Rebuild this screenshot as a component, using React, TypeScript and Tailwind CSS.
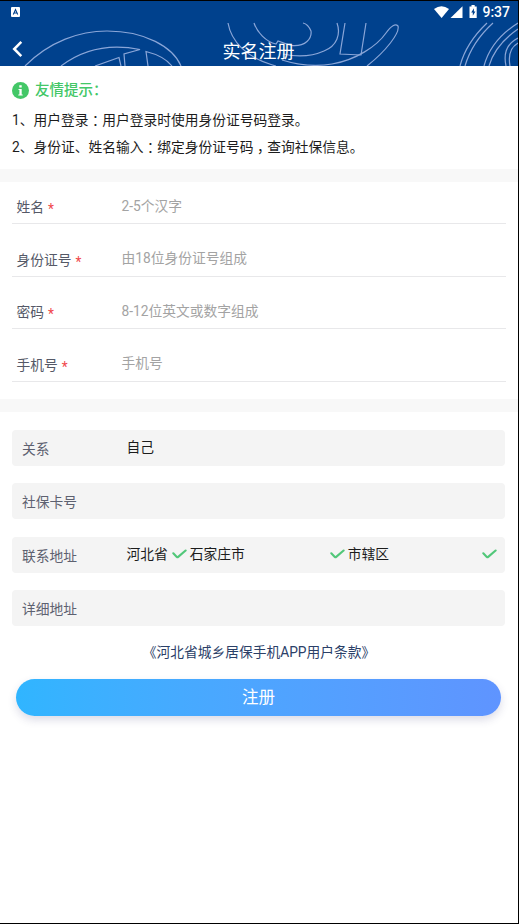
import type { ReactNode } from 'react';

interface Field {
  label: string;
  placeholder: string;
}

const fields: Field[] = [
  { label: '姓名', placeholder: '2-5个汉字' },
  { label: '身份证号', placeholder: '由18位身份证号组成' },
  { label: '密码', placeholder: '8-12位英文或数字组成' },
  { label: '手机号', placeholder: '手机号' },
];

// Full-width mark centred in its em box
function Mark({ children }: { children: string }) {
  return <span className="inline-block w-[1em] text-center [font-feature-settings:'halt']">{children}</span>;
}

function StatusBar() {
  return (
    <div className="flex h-[22px] items-center justify-between pl-[11px] pr-[8px]">
      <svg width="9" height="10" viewBox="0 0 9 10">
        <rect width="9" height="10" rx="1" fill="#fff" />
        <path d="M2.3 7.5 4.5 2.5 6.7 7.5M3.2 6h2.6" fill="none" stroke="#00418d" strokeWidth="1.1" />
      </svg>
      <div className="flex items-center">
        <svg width="46" height="14" viewBox="0 0 46 14" fill="#fff">
          <path d="M0 4Q7.5-1.4 15 4L7.6 13Z" />
          <path d="M28.5 1.2V13H16.500Z" />
          <path d="M35.500 1.400h2V0h3.200v1.400h2V13h-7.200Z" />
          <path d="M40 3.200 37.200 7.500h1.600v3.200l2.600-4.200h-1.500Z" fill="#00418d" />
        </svg>
        <span className="ml-[2px] text-[14px] font-medium leading-none text-white">9:37</span>
      </div>
    </div>
  );
}

function HeaderPattern() {
  return (
    <svg className="absolute inset-0" width="518" height="65" viewBox="0 1 518 65" fill="none" stroke="#8aa6d8" strokeWidth="1.2">
      <path d="M25 66C50 41 80 31 107 31C145 31 173 47 181 66" />
      <path d="M61 66C82 50 108 43 140 49.500L124 54L125 66" />
      <path d="M95 66L119 57.500L121 66" />
      <path d="M148 66L146 51.500Q164 56 172 66" />
      <path d="M228 23C231 40 245 58 276 66" />
      <path d="M254 23C257 32 266 42 276 44L278 41L291 45.500C306 47 312 38 311 31Q308 24 303 23" />
      <path d="M337 23C341 34 337 46 324 51Q306 59 283 54" />
      <path d="M345 23L340 54L361 55L366 23" />
      <path d="M282 60C298 65 315 67 332 64C356 60 377 46 386 33Q394 22 398 26C400 33 386 51 367 66" />
      <path d="M460 66Q466 43 487 23M465 66Q472 42 493 23" />
      <path d="M484 66Q491 40 518 23M489 66Q495 45 518 29" />
      <path d="M506 66C503 52 508 43 518 38M510 66C508 55 511 47 518 43" />
    </svg>
  );
}

function Check() {
  return (
    <svg className="shrink-0" width="15" height="10" viewBox="0 0 15 10" fill="none" stroke="#51c779" strokeWidth="2.1" strokeLinecap="round" strokeLinejoin="round">
      <path d="M1.300 4.300 4.800 7.900Q5.500 8.500 6.200 7.900L13.600 1.500" />
    </svg>
  );
}

function InfoRow({ label, children }: { label: string; children?: ReactNode }) {
  return (
    <div className="flex h-[36px] items-center rounded-[4px] bg-[#f4f4f4] pl-[10px] leading-5">
      <span className="w-[104.5px] pt-[2px] text-[#5d6170]">{label}</span>
      {children}
    </div>
  );
}

export default function App() {
  return (
    <div className="h-[924px] w-[519px] overflow-hidden border-y border-r border-black bg-white font-[Roboto,'Noto_Sans_CJK_SC',sans-serif] text-[13.75px] font-normal text-[#1c1c1c]">
      <header className="relative h-[65px] bg-[#00418d]">
        <HeaderPattern />
        <div className="relative">
          <StatusBar />
          <div className="flex h-[43px] items-center">
            <svg className="ml-3 mt-2" width="11" height="18" viewBox="0 0 11 18" fill="none" stroke="#fff" strokeWidth="2.5">
              <path d="M9.300 1.800 2.200 9l7.100 7.200" />
            </svg>
            <h1 className="-ml-[24px] flex-1 pt-[14px] text-center text-[18px] font-normal leading-6 text-white">实名注册</h1>
          </div>
        </div>
      </header>

      <section className="h-[103px] px-3 pt-[14px]">
        <div className="flex h-5 items-center">
          <svg width="17" height="17" viewBox="0 0 17 17">
            <circle cx="8.500" cy="8.500" r="8.500" fill="#43c767" />
            <path d="M7.300 3.300h2.400v2.100H7.300ZM6.500 7h3.200v5.400h1v1.100H6.300v-1.100h1.100V8.100h-.9Z" fill="#fff" />
          </svg>
          <span className="ml-[6px] pt-[2px] text-[14.5px] font-medium leading-5 text-[#43c767]">友情提示：</span>
        </div>
        <div className="mt-[7px] leading-[26.5px]">
          <p>1、用户登录<Mark>：</Mark>用户登录时使用身份证号码登录。</p>
          <p>2、身份证、姓名输入<Mark>：</Mark>绑定身份证号码<Mark>，</Mark>查询社保信息。</p>
        </div>
      </section>

      <div className="h-[13px] bg-[#f8f8f8]" />

      <form className="h-[217px] pl-3 pr-[12px]">
        {fields.map((field, i) => (
          <div
            key={field.label}
            className={`flex items-end border-b border-[#e8e8ea] pl-[4.5px] ${i === 0 ? 'h-[42px]' : 'h-[52.67px]'}`}
          >
            <label className="flex w-[105px] pb-[4px] leading-5 text-[#555967]">
              {field.label}
              <span className="ml-[4px] pt-[2px] text-[#f0474b]">*</span>
            </label>
            <span className="pb-[7.5px] leading-5 text-[#a3a3a3]">{field.placeholder}</span>
          </div>
        ))}
      </form>

      <div className="h-[13px] bg-[#f8f8f8]" />

      <section className="flex flex-col gap-[17.6px] px-3 pr-[13px] pt-[17.7px]">
        <InfoRow label="关系">
          <span className="-mt-[2px] leading-5">自己</span>
        </InfoRow>
        <InfoRow label="社保卡号" />
        <InfoRow label="联系地址">
          <div className="-mt-px flex flex-1 items-center pr-[8px]">
            <span>河北省</span>
            <span className="ml-[4px] flex"><Check /></span>
            <span className="ml-[3px] w-[140px]">石家庄市</span>
            <Check />
            <span className="ml-[3px] flex-1">市辖区</span>
            <Check />
          </div>
        </InfoRow>
        <InfoRow label="详细地址" />
      </section>

      <div className="mt-[16px] text-center leading-5 text-[#2b4068]">《河北省城乡居保手机APP用户条款》</div>
      <button className="ml-4 mt-[17px] block h-[37px] w-[485px] rounded-full bg-linear-to-r from-[#30b5ff] to-[#5f94ff] text-[16.5px] font-normal text-white shadow-[0_4px_8px_rgba(60,60,120,0.18)]">
        注册
      </button>
    </div>
  );
}
